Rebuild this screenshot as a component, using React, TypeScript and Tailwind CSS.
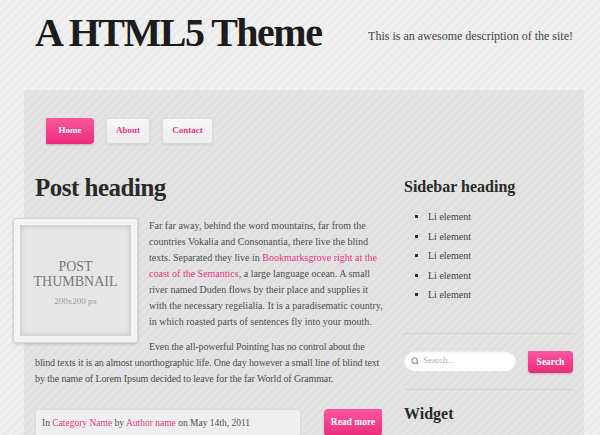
import { Search } from "lucide-react";

const serif = "font-['Liberation_Serif',_'Times_New_Roman',_serif]";

function NavButton({ label, active }: { label: string; active?: boolean }) {
  return (
    <a
      className={
        active
          ? "flex h-[26px] w-[48px] items-center justify-center rounded-[4px] rounded-tl-[1px] rounded-bl-[1px] bg-linear-to-b from-[#ff56a3] to-[#ea2a79] text-[9px] font-bold text-white shadow-[0_1px_2px_rgba(0,0,0,0.2)]"
          : "flex h-[26px] items-center justify-center rounded-[3px] border border-[#dadada] bg-linear-to-b from-[#f7f7f7] to-[#ececec] text-[9px] font-bold text-[#ec3585] shadow-[0_1px_2px_rgba(0,0,0,0.08)]"
      }
      style={active ? undefined : { width: label === "About" ? 44 : 51 }}
    >
      {label}
    </a>
  );
}

export default function App() {
  const items = ["Li element", "Li element", "Li element", "Li element", "Li element"];

  return (
    <div
      className={`h-[435px] w-[600px] overflow-hidden bg-[repeating-linear-gradient(135deg,#f1f1f1_0px,#f1f1f1_3px,#ebebeb_3px,#ebebeb_6px)] ${serif}`}
    >
      {/* Header */}
      <header className="flex h-[90px] justify-between pl-[35px] pr-[27px]">
        <h1 className="pt-[13px] text-[40px] leading-[40px] font-bold tracking-[-1.5px] text-[#1c1c1c]">
          A HTML5 Theme
        </h1>
        <p className="pt-[28px] text-[12px] leading-[16px] text-[#444]">
          This is an awesome description of the site!
        </p>
      </header>

      {/* Main panel */}
      <div className="ml-[24px] h-[345px] w-[560px] bg-[repeating-linear-gradient(135deg,#e4e4e4_0px,#e4e4e4_3px,#dfdfdf_3px,#dfdfdf_6px)] px-[11px] pt-[28px]">
        <nav className="ml-[11px] flex gap-[12px]">
          <NavButton label="Home" active />
          <NavButton label="About" />
          <NavButton label="Contact" />
        </nav>

        <div className="mt-[29px] flex gap-[19px]">
          {/* Post */}
          <main className="w-[350px]">
            <h2 className="text-[25px] leading-[30px] font-bold tracking-[-0.5px] text-[#2a2a2a]">
              Post heading
            </h2>

            <div className="mt-[15px] text-[10px] leading-[16px] text-[#4f4f4f]">
              <div className="float-left -ml-[22px] mr-[11px] h-[125px] w-[125px] rounded-[3px] border border-[#d6d6d6] bg-[#f4f4f4] p-[6px] shadow-[0_1px_3px_rgba(0,0,0,0.18)]">
                <div className={`flex h-full w-full flex-col items-center justify-center bg-[#e6e6e6] pt-[4px] shadow-[inset_0_0_6px_rgba(0,0,0,0.18)] ${serif}`}>
                  <span className="text-[14px] leading-[15px] text-[#7a7a7a]">POST</span>
                  <span className="text-[14px] leading-[15px] text-[#7a7a7a]">THUMBNAIL</span>
                  <span className="mt-[6px] text-[9px] leading-[12px] text-[#9c9c9c]">200x200 px</span>
                </div>
              </div>
              <p>
                Far far away, behind the word mountains, far from the countries Vokalia and
                Consonantia, there live the blind texts. Separated they live in{" "}
                <a className="text-[#ec3585]">Bookmarksgrove right at the coast of the Semantics</a>, a
                large language ocean. A small river named Duden flows by their place and supplies it
                with the necessary regelialia. It is a paradisematic country, in which roasted parts of
                sentences fly into your mouth.
              </p>
              <p className="mt-[9px] tracking-[-0.12px]">
                Even the all-powerful Pointing has no control about the blind texts it is an almost
                unorthographic life. One day however a small line of blind text by the name of Lorem
                Ipsum decided to leave for the far World of Grammar.
              </p>
            </div>

            <div className="mt-[22px] flex items-start justify-between">
              <div className="h-[32px] w-[266px] rounded-[3px] border border-[#dcdcdc] bg-[#efefef] px-[6px] pt-[5px] text-[9.5px] leading-[16px] text-[#4f4f4f] shadow-[0_1px_2px_rgba(0,0,0,0.06)]">
                In <a className="text-[#ec3585]">Category Name</a> by{" "}
                <a className="text-[#ec3585]">Author name</a> on May 14th, 2011
              </div>
              <button className="mr-[3px] flex h-[27px] w-[58px] items-center justify-center rounded-[4px] rounded-tr-[1px] bg-linear-to-b from-[#ff56a3] to-[#ea2a79] text-[9.5px] font-bold text-white shadow-[0_1px_2px_rgba(0,0,0,0.2)]">
                Read more
              </button>
            </div>
          </main>

          {/* Sidebar */}
          <aside className="w-[169px] pt-[4px]">
            <h3 className="text-[16px] leading-[20px] font-bold text-[#2a2a2a]">Sidebar heading</h3>
            <ul className="mt-[10px] list-[square] pl-[24px] text-[10px] leading-[19.6px] text-[#444] marker:text-[#333]">
              {items.map((item, i) => (
                <li key={i}>{item}</li>
              ))}
            </ul>

            <div className="mt-[28px] -ml-[1px] border-t border-[#d2d2d2]" />

            <div className="mt-[17px] flex items-start">
              <div className="flex h-[20px] w-[112px] items-center gap-[4px] rounded-full bg-white pl-[7px] shadow-[inset_0_1px_2px_rgba(0,0,0,0.12)]">
                <Search size={8} strokeWidth={3.5} className="text-[#9a9a9a]" />
                <span className="text-[9px] text-[#b0b0b0]">Search...</span>
              </div>
              <button className="ml-auto flex h-[22px] w-[45px] items-center justify-center rounded-[4px] rounded-tl-[1px] bg-linear-to-b from-[#ff56a3] to-[#ea2a79] text-[9.5px] font-bold text-white shadow-[0_1px_2px_rgba(0,0,0,0.2)]">
                Search
              </button>
            </div>

            <div className="mt-[16px] border-t border-[#d2d2d2]" />

            <h3 className="mt-[14px] text-[16px] leading-[20px] font-bold text-[#2a2a2a]">Widget</h3>
          </aside>
        </div>
      </div>
    </div>
  );
}
